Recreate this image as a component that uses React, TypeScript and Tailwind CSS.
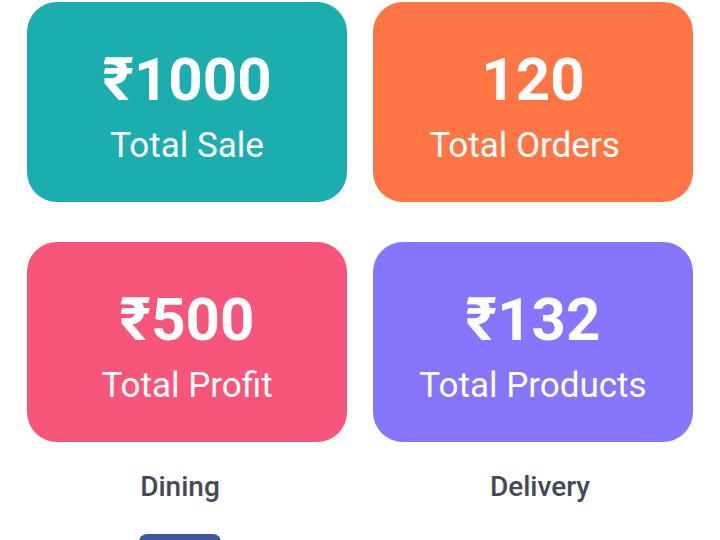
const stats = [
  { value: "₹1000", label: "Total Sale", color: "bg-[#1caeae]", shift: "" },
  { value: "120", label: "Total Orders", color: "bg-[#ff7544]", shift: "pr-[17px]" },
  { value: "₹500", label: "Total Profit", color: "bg-[#f7567a]", shift: "" },
  { value: "₹132", label: "Total Products", color: "bg-[#8576fd]", shift: "" },
];

export default function App() {
  return (
    <div className="h-[540px] w-[720px] overflow-hidden bg-white font-['Roboto',sans-serif]">
      <div className="grid grid-cols-2 gap-x-[26px] gap-y-[40px] px-[27px] pt-[2px]">
        {stats.map((s) => (
          <div
            key={s.label}
            className={`flex h-[200px] flex-col items-center rounded-[30px] pt-[48px] text-white ${s.color}`}
          >
            <span className="text-[60px] font-bold leading-none">{s.value}</span>
            <span className={`mt-[18px] text-[35px] leading-none ${s.shift}`}>{s.label}</span>
          </div>
        ))}
      </div>

      <div className="mt-[31px] grid grid-cols-2">
        <div className="flex flex-col items-center">
          <span className="text-[28px] font-medium leading-none text-[#454857]">Dining</span>
          <div className="mt-[33px] h-[40px] w-[82px] rounded-t-lg bg-[#3b5998]" />
        </div>
        <div className="flex flex-col items-center">
          <span className="text-[28px] font-medium leading-none text-[#454857]">Delivery</span>
        </div>
      </div>
    </div>
  );
}
